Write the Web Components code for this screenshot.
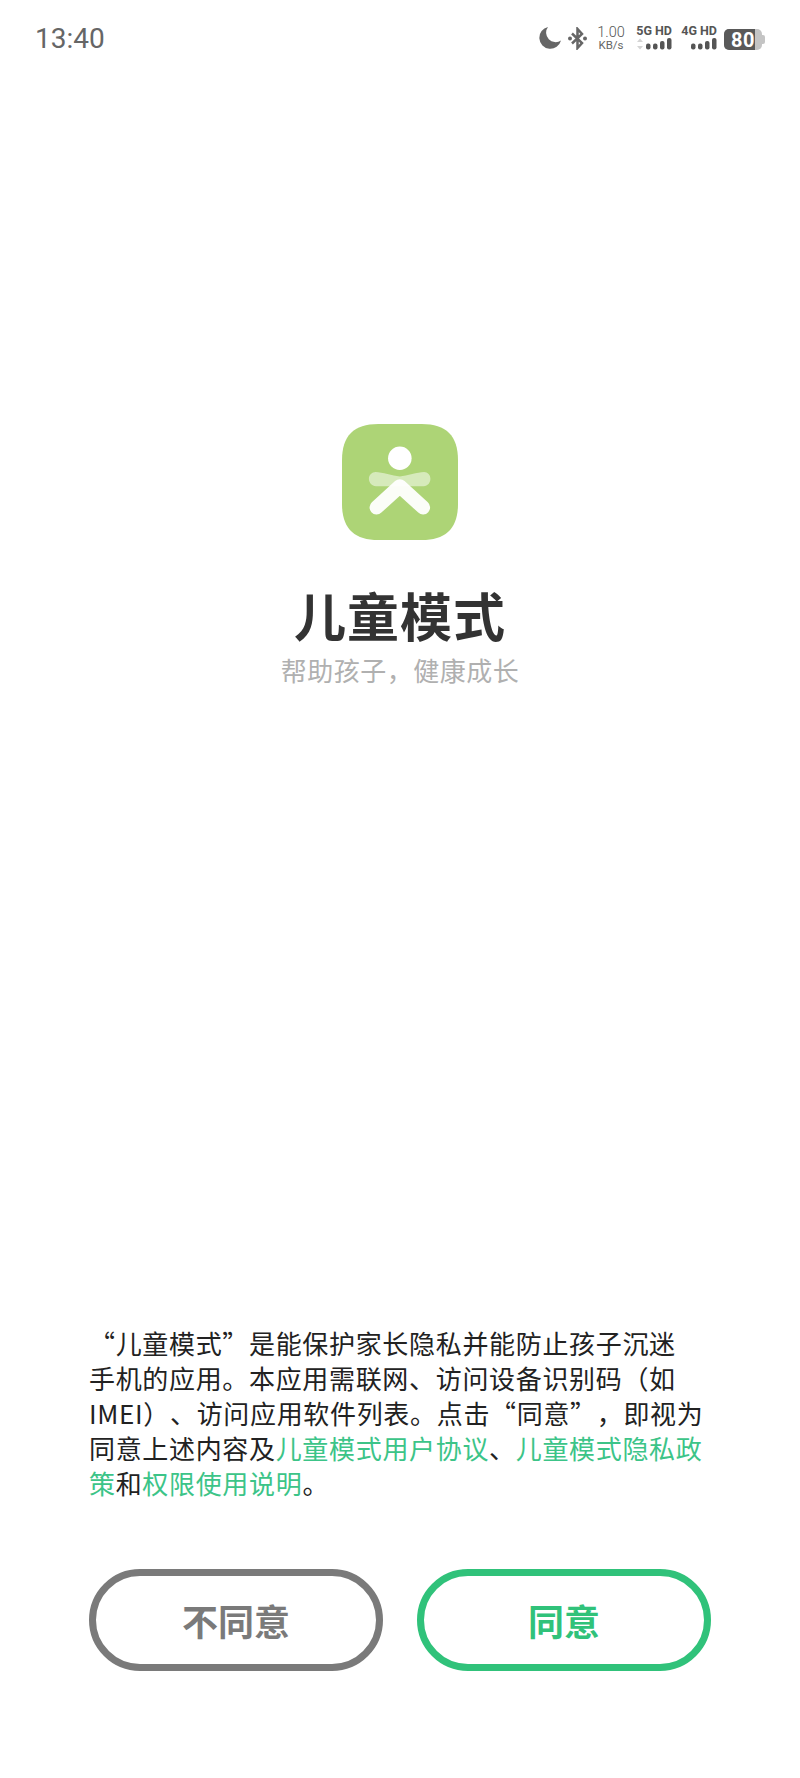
<!DOCTYPE html>
<html lang="zh-CN"><head><meta charset="utf-8"><style>
html,body{margin:0;padding:0;background:#fff}
body{width:800px;height:1778px;font-family:"Noto Sans CJK SC","Noto Sans",sans-serif}
</style></head><body>
<kid-screen>
<status-bar slot="status"></status-bar>
<app-hero slot="hero"></app-hero>
<consent-text slot="text">“儿童模式”是能保护家长隐私并能防止孩子沉迷<br>手机的应用。本应用需联网、访问设备识别码（如<br>IMEI）、访问应用软件列表。点击“同意”，即视为<br>同意上述内容及<a>儿童模式用户协议</a>、<a>儿童模式隐私政<br>策</a>和<a>权限使用说明</a>。</consent-text>
<div slot="buttons" style="display:flex;justify-content:space-between">
<pill-button style="--c:#7a7a7a">不同意</pill-button>
<pill-button style="--c:#30c27a">同意</pill-button>
</div>
</kid-screen>
<script>
function def(name,html){customElements.define(name,class extends HTMLElement{constructor(){super();this.attachShadow({mode:'open'}).innerHTML=html}})}
const bars=`<g fill="#555"><rect x="10" y="5.500" width="4.500" height="6" rx="2"/><rect x="17" y="5.500" width="4.500" height="6" rx="2"/><rect x="24" y="3" width="4.500" height="8.500" rx="2"/><rect x="31" y="0" width="4.500" height="11.500" rx="2"/></g>`;
def('kid-screen',`<style>:host{display:flex;flex-direction:column;width:800px;height:1778px;box-sizing:border-box}
.h{padding-top:424px}.t{margin-top:auto;padding:0 80px 0 89px}.b{padding:69px 89px 107px 89px}</style>
<slot name="status"></slot><div class="h"><slot name="hero"></slot></div><div class="t"><slot name="text"></slot></div><div class="b"><slot name="buttons"></slot></div>`);
def('status-bar',`<style>:host{display:flex;align-items:center;justify-content:space-between;height:76px;padding:0 35px;box-sizing:border-box;margin-bottom:-76px;color:#666;font-family:"Roboto",sans-serif}
.time{font-size:28px;color:#666}.r{display:flex;align-items:center}
.sp{display:flex;flex-direction:column;align-items:center;width:26px;margin:0 12px 0 11px;white-space:nowrap}
.sp b{font-weight:300;font-size:14.500px;line-height:15px;color:#555}.sp i{font-style:normal;font-size:11.500px;line-height:11px;color:#666}
.sig{display:flex;flex-direction:column;align-items:flex-end;width:36px;font-weight:700;font-size:12.500px;line-height:13px;color:#555;white-space:nowrap;margin-bottom:3px}
.sig svg{display:block;margin-top:1px}
.m{margin-right:7px}
</style><span class="time">13:40</span><div class="r">
<svg class="m" width="22" height="22" viewBox="0 0 22 22"><path d="M9 0A11 11 0 1 0 22 13.500 A9.500 9.500 0 0 1 9 0Z" fill="#666"/></svg>
<svg width="19" height="23" viewBox="0 0 19 23"><path d="M4 6.500L14 16 9.500 21V2L14 7 4 16.500" fill="none" stroke="#666" stroke-width="2.500"/><circle cx="2" cy="11.500" r="2" fill="#666"/><circle cx="17" cy="11.500" r="2" fill="#666"/></svg>
<div class="sp"><b>1.00</b><i>KB/s</i></div>
<div class="sig" style="margin-right:9px"><span>5G HD</span><svg width="36" height="12" viewBox="0 0 36 12"><path d="M4 0.500l3 3.500h-6zM4 11.500l3-3.500h-6z" fill="#d4d4d4"/>${bars}</svg></div>
<div class="sig" style="margin-right:7px"><span>4G HD</span><svg width="36" height="12" viewBox="0 0 36 12">${bars}</svg></div>
<battery-icon></battery-icon></div>`);
def('battery-icon',`<style>:host{display:flex;align-items:center;width:41px;height:21px;font:700 20px "Roboto",sans-serif;color:#fff;margin-top:3px}
.o{display:flex;width:38px;height:21px;border-radius:5px;overflow:hidden;background:#c4c4c4}
.f{width:31px;background:#595959;display:flex;align-items:center;justify-content:flex-end;letter-spacing:.5px}
.n{width:3px;height:9px;background:#c4c4c4;border-radius:0 2px 2px 0}</style><div class="o"><div class="f">80</div></div><div class="n"></div>`);
def('app-hero',`<style>:host{display:flex;flex-direction:column;align-items:center;color:#333}
h1{margin:39px 0 0;font-size:52px;line-height:72px;font-weight:700;color:#333;letter-spacing:1px}
p{margin:1px 0 0;font-size:26px;line-height:36px;color:#b0b0b0;letter-spacing:.5px;text-spacing-trim:space-all}svg{display:block}</style>
<svg width="116" height="116" viewBox="0 0 345 345"><path d="M108 0H237C310 0 345 35 345 108V237C345 310 310 345 237 345H108C35 345 0 310 0 237V108C0 35 35 0 108 0Z" fill="#add476"/><circle cx="172" cy="102" r="35" fill="#fff"/><path d="M100 143C120 143 150 155 172 156C194 155 224 143 244 143C255 143 263 152 263 163C263 175 255 185 243 185H101C89 185 80 175 80 163C80 152 89 143 100 143Z" fill="#fff" fill-opacity=".5"/><path d="M103 248L172 185L241 248" fill="none" stroke="#fff" stroke-opacity=".95" stroke-width="42" stroke-linecap="round" stroke-linejoin="round"/></svg>
<h1>儿童模式</h1><p>帮助孩子，健康成长</p>`);
def('consent-text',`<style>:host{display:block;font-size:26px;line-height:35px;letter-spacing:.670px;color:#222;white-space:nowrap;text-spacing-trim:space-all;text-autospace:no-autospace}::slotted(a){color:#3cc488}</style><slot></slot>`);
def('pill-button',`<style>:host{display:flex;align-items:center;justify-content:center;width:294px;height:102px;box-sizing:border-box;border:7px solid var(--c);border-radius:51px;color:var(--c);font-size:36px;font-weight:700}</style><slot></slot>`);
</script></body></html>
